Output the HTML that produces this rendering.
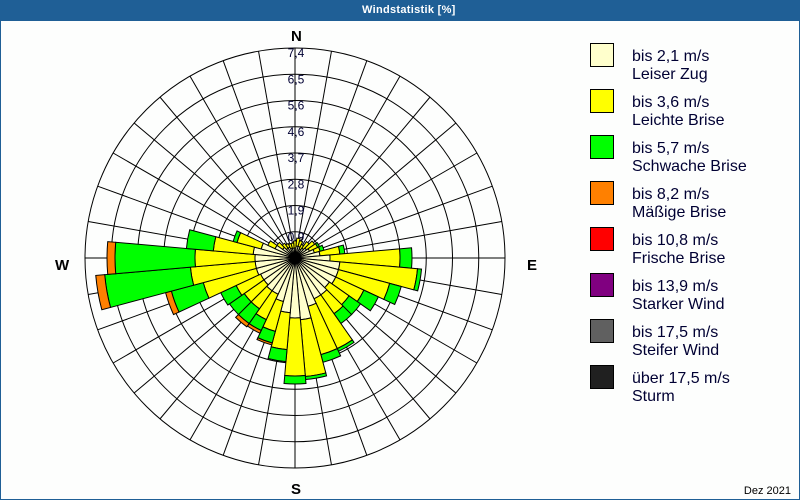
<!DOCTYPE html>
<html><head><meta charset="utf-8"><style>
html,body{margin:0;padding:0;background:#fff}
#wrap{position:relative;width:798px;height:498px;border:1px solid #1f5f96;background:#fdfefd;overflow:hidden;font-family:"Liberation Sans",sans-serif;color:#000033}
#hdr{position:absolute;left:0;top:0;width:798px;height:20px;background:#1f5f96}
#hdr span{position:absolute;left:361px;top:3px;color:#fff;font-weight:bold;font-size:11px;letter-spacing:0.3px}
.box{position:absolute;left:589px;width:22px;height:22px;border:1px solid #000}
.lt{position:absolute;left:631px;font-size:16px;line-height:18px;white-space:nowrap}
.dir{position:absolute;font-weight:bold;font-size:15px;color:#000}
#date{position:absolute;right:8px;top:484px;font-size:11px;color:#000}
svg{position:absolute;left:0;top:0}
</style></head><body><div id="wrap">
<div id="hdr"><span>Windstatistik [%]</span></div>
<svg id="s" width="798" height="498" viewBox="1 1 798 498"></svg>
<div class="dir" style="left:290px;top:27px">N</div>
<div class="dir" style="left:290px;top:480px">S</div>
<div class="dir" style="left:54px;top:256px">W</div>
<div class="dir" style="left:526px;top:256px">E</div>
<div class="box" style="top:42px;background:#ffffcc"></div>
<div class="lt" style="top:47px">bis 2,1 m/s<br>Leiser Zug</div>
<div class="box" style="top:88px;background:#ffff00"></div>
<div class="lt" style="top:93px">bis 3,6 m/s<br>Leichte Brise</div>
<div class="box" style="top:134px;background:#00ff00"></div>
<div class="lt" style="top:139px">bis 5,7 m/s<br>Schwache Brise</div>
<div class="box" style="top:180px;background:#ff8000"></div>
<div class="lt" style="top:185px">bis 8,2 m/s<br>Mäßige Brise</div>
<div class="box" style="top:226px;background:#ff0000"></div>
<div class="lt" style="top:231px">bis 10,8 m/s<br>Frische Brise</div>
<div class="box" style="top:272px;background:#800080"></div>
<div class="lt" style="top:277px">bis 13,9 m/s<br>Starker Wind</div>
<div class="box" style="top:318px;background:#606060"></div>
<div class="lt" style="top:323px">bis 17,5 m/s<br>Steifer Wind</div>
<div class="box" style="top:364px;background:#202020"></div>
<div class="lt" style="top:369px">über 17,5 m/s<br>Sturm</div>
<div id="date">Dez 2021</div>
</div>
<script>
var cx=295,cy=258,R=26.25,ns="http://www.w3.org/2000/svg",s=document.getElementById('s');
function el(t,a){var e=document.createElementNS(ns,t);for(var k in a)e.setAttribute(k,a[k]);s.appendChild(e);return e;}
for(var i=1;i<=8;i++)el('circle',{cx:cx,cy:cy,r:R*i,fill:'none',stroke:'#000','stroke-width':1});
for(var d=0;d<360;d+=10){var a=d*Math.PI/180;el('line',{x1:cx,y1:cy,x2:cx+210*Math.sin(a),y2:cy-210*Math.cos(a),stroke:'#000','stroke-width':1});}
var labs=['0,9','1,9','2,8','3,7','4,6','5,6','6,5','7,4'];
for(var i=0;i<8;i++){var t=el('text',{x:cx+1,y:cy-R*(i+1)+9,'font-size':12,'text-anchor':'middle','font-family':'Liberation Sans, sans-serif',fill:'#000033'});t.textContent=labs[i];}
var data={0:[10,17],10:[12,20],20:[12,18],30:[10,15],40:[12,20],50:[14,24],60:[16,25,27],70:[20,26,30],80:[25,45,50],90:[35,105,117],100:[45,123,127],110:[45,98,110],120:[45,76,92],130:[42,66,80],140:[45,68,80],150:[45,100,103],160:[50,100,108],170:[62,119,122],180:[60,118,126],190:[55,92,104],200:[45,76,88,90],210:[40,68,80,83],220:[40,62,80,84],230:[38,62,80],240:[38,65,82],250:[40,95,128,134],260:[40,105,191,200],270:[40,100,180,188],280:[42,82,109],290:[35,60,64],300:[22,30],310:[15,22],320:[12,18],330:[12,16],340:[10,15],350:[10,15]};
var cols=['#ffffcc','#ffff00','#00ff00','#ff8000'];
function pt(r,deg){var a=deg*Math.PI/180;return (cx+r*Math.sin(a)).toFixed(2)+' '+(cy-r*Math.cos(a)).toFixed(2);}
for(var d in data){var v=data[d],r0=0;d=+d;
for(var j=0;j<v.length;j++){var r1=v[j];if(r1<=r0)continue;
var p='M'+pt(r0,d-5)+' L'+pt(r1,d-5)+' A'+r1+' '+r1+' 0 0 1 '+pt(r1,d+5)+' L'+pt(r0,d+5);
if(r0>0)p+=' A'+r0+' '+r0+' 0 0 0 '+pt(r0,d-5);p+='Z';
el('path',{d:p,fill:cols[j],stroke:'#000','stroke-width':1,'stroke-linejoin':'miter'});r0=r1;}}
el('circle',{cx:cx,cy:cy,r:5,fill:'#000'});
</script>
</body></html>
